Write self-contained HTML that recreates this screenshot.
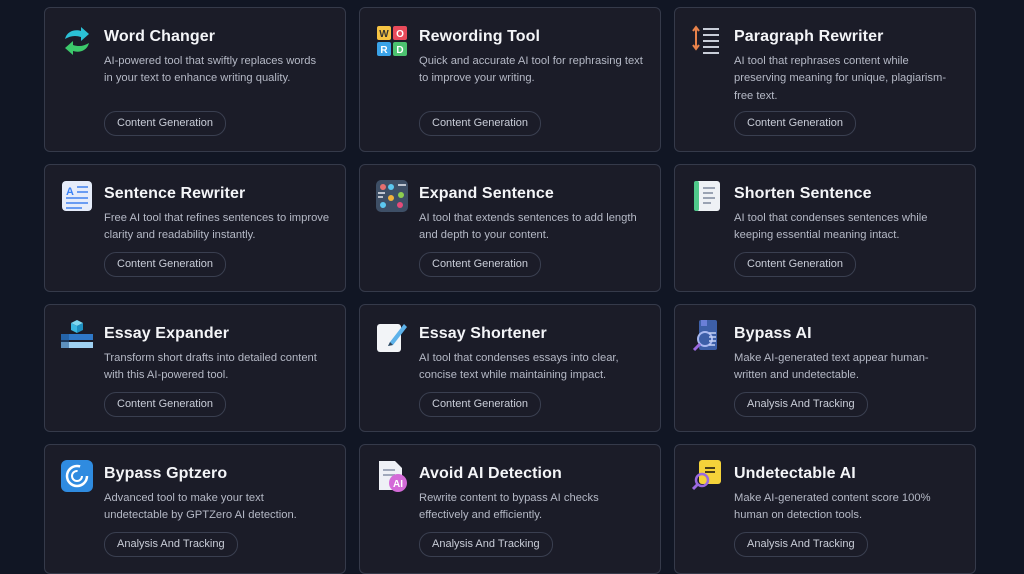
<!DOCTYPE html>
<html><head><meta charset="utf-8"><style>
html,body{margin:0;padding:0;background:#111624;width:1024px;height:555px;overflow:hidden;font-family:"Liberation Sans",sans-serif}
.c{position:absolute;width:302px;background:#1b1c28;border:1px solid #353a4a;border-radius:6px;box-sizing:border-box}
.ic{position:absolute;left:16px;width:32px;height:32px}
.t{position:absolute;left:59px;color:#f4f5f8;font-size:16px;font-weight:bold;letter-spacing:0.1px;white-space:nowrap}
.d{position:absolute;left:59px;width:229px;color:#b5b9c6;font-size:11.2px;line-height:17.3px}
.g{position:absolute;left:59px;height:23px;border:1px solid #3a3f50;border-radius:12px;padding:0 12px;color:#c9cdd8;font-size:11px;line-height:23px;white-space:nowrap}
</style></head><body>

<!-- row1 -->
<div class="c" style="left:44px;top:7px;height:145px">
<svg class="ic" style="top:17px" viewBox="0 0 32 32"><path d="M4 14 C6 6 14 4 20 6 L20 2 L28 9 L20 16 L20 12 C14 10 9 11 4 14Z" fill="#2bc1d6"/><path d="M28 18 C26 26 18 28 12 26 L12 30 L4 23 L12 16 L12 20 C18 22 23 21 28 18Z" fill="#3cc96b"/></svg>
<div class="t" style="top:20px">Word Changer</div>
<div class="d" style="top:45px;width:218px">AI-powered tool that swiftly replaces words in your text to enhance writing quality.</div>
<div class="g" style="top:103px">Content Generation</div></div>

<div class="c" style="left:359px;top:7px;height:145px">
<svg class="ic" style="top:17px" viewBox="0 0 32 32"><rect x="1" y="1" width="14" height="14" rx="2" fill="#f6c343"/><rect x="17" y="1" width="14" height="14" rx="2" fill="#e94a5a"/><rect x="1" y="17" width="14" height="14" rx="2" fill="#3aa3e8"/><rect x="17" y="17" width="14" height="14" rx="2" fill="#4cc26f"/><text x="8" y="12" font-size="10" text-anchor="middle" fill="#333" font-weight="bold">W</text><text x="24" y="12" font-size="10" text-anchor="middle" fill="#fff" font-weight="bold">O</text><text x="8" y="28" font-size="10" text-anchor="middle" fill="#fff" font-weight="bold">R</text><text x="24" y="28" font-size="10" text-anchor="middle" fill="#fff" font-weight="bold">D</text></svg>
<div class="t" style="top:20px">Rewording Tool</div>
<div class="d" style="top:45px">Quick and accurate AI tool for rephrasing text to improve your writing.</div>
<div class="g" style="top:103px">Content Generation</div></div>

<div class="c" style="left:674px;top:7px;height:145px">
<svg class="ic" style="top:16px" viewBox="0 0 32 32"><path d="M5 3v22M2 7l3-4 3 4M2 21l3 4 3-4" stroke="#e8824a" stroke-width="2" fill="none"/><path d="M12 5h16M12 11h16M12 17h16M12 23h16M12 29h16" stroke="#c8cdd8" stroke-width="2"/></svg>
<div class="t" style="top:20px">Paragraph Rewriter</div>
<div class="d" style="top:45px;width:222px">AI tool that rephrases content while preserving meaning for unique, plagiarism-free text.</div>
<div class="g" style="top:103px">Content Generation</div></div>

<!-- row2 -->
<div class="c" style="left:44px;top:164px;height:128px">
<svg class="ic" style="top:15px" viewBox="0 0 32 32"><rect x="1" y="1" width="30" height="30" rx="4" fill="#e6ecfa"/><text x="9" y="15" font-size="11" fill="#3b82f6" font-weight="bold" text-anchor="middle">A</text><path d="M16 7h11M16 12h11M5 18h22M5 23h22M5 28h16" stroke="#6a9cf2" stroke-width="2"/></svg>
<div class="t" style="top:20px">Sentence Rewriter</div>
<div class="d" style="top:45px">Free AI tool that refines sentences to improve clarity and readability instantly.</div>
<div class="g" style="top:87px">Content Generation</div></div>

<div class="c" style="left:359px;top:164px;height:128px">
<svg class="ic" style="top:15px" viewBox="0 0 32 32"><rect x="0" y="0" width="32" height="32" rx="5" fill="#3e4f66"/><circle cx="7" cy="7" r="3" fill="#e56f6f"/><circle cx="15" cy="7" r="3" fill="#5cc8f0"/><circle cx="25" cy="15" r="3" fill="#8dcf4f"/><circle cx="15" cy="18" r="3" fill="#f2b23b"/><circle cx="7" cy="25" r="3" fill="#5cc8f0"/><circle cx="24" cy="25" r="3" fill="#e54b7a"/><path d="M22 5h8M2 13h7M2 17h5" stroke="#e8ecf2" stroke-width="1.5"/></svg>
<div class="t" style="top:20px">Expand Sentence</div>
<div class="d" style="top:45px">AI tool that extends sentences to add length and depth to your content.</div>
<div class="g" style="top:87px">Content Generation</div></div>

<div class="c" style="left:674px;top:164px;height:128px">
<svg class="ic" style="top:15px" viewBox="0 0 32 32"><rect x="3" y="1" width="26" height="30" rx="3" fill="#eef1f5"/><rect x="3" y="1" width="5" height="30" rx="2" fill="#4fc98a"/><path d="M12 8h12M12 13h10M12 18h12M12 23h8" stroke="#9aa3b3" stroke-width="2"/></svg>
<div class="t" style="top:20px">Shorten Sentence</div>
<div class="d" style="top:45px">AI tool that condenses sentences while keeping essential meaning intact.</div>
<div class="g" style="top:87px">Content Generation</div></div>

<!-- row3 -->
<div class="c" style="left:44px;top:304px;height:128px">
<svg class="ic" style="top:15px" viewBox="0 0 32 32"><path d="M10 3l6-3 6 3-6 3z" fill="#7fd8f0"/><path d="M10 3v7l6 3V6z" fill="#3ab7e0"/><path d="M22 3v7l-6 3V6z" fill="#1e8fc0"/><rect x="0" y="14" width="32" height="6" fill="#2f78c8"/><rect x="0" y="22" width="32" height="6" fill="#9fd1f2"/><rect x="0" y="14" width="8" height="14" fill="#1c4f8a" opacity=".5"/></svg>
<div class="t" style="top:20px">Essay Expander</div>
<div class="d" style="top:45px">Transform short drafts into detailed content with this AI-powered tool.</div>
<div class="g" style="top:87px">Content Generation</div></div>

<div class="c" style="left:359px;top:304px;height:128px">
<svg class="ic" style="top:15px" viewBox="0 0 32 32"><rect x="1" y="4" width="24" height="28" rx="3" fill="#f2f4f7"/><path d="M14 22L28 4l3 3-14 18-5 1z" fill="#5db2ea"/><path d="M12 26l2-4 3 3z" fill="#33475b"/></svg>
<div class="t" style="top:20px">Essay Shortener</div>
<div class="d" style="top:45px">AI tool that condenses essays into clear, concise text while maintaining impact.</div>
<div class="g" style="top:87px">Content Generation</div></div>

<div class="c" style="left:674px;top:304px;height:128px">
<svg class="ic" style="top:15px" viewBox="0 0 32 32"><rect x="8" y="0" width="18" height="30" rx="2" fill="#3d5fa8"/><rect x="10" y="0" width="6" height="6" fill="#6a7fd8"/><circle cx="14" cy="19" r="7" fill="none" stroke="#a8b8f0" stroke-width="2"/><path d="M9 24l-6 6" stroke="#9b6ae0" stroke-width="3"/><path d="M18 13h7M18 17h7M18 21h7M18 25h6" stroke="#c7d3f5" stroke-width="1.5"/></svg>
<div class="t" style="top:20px">Bypass AI</div>
<div class="d" style="top:45px;width:222px">Make AI-generated text appear human-written and undetectable.</div>
<div class="g" style="top:87px">Analysis And Tracking</div></div>

<!-- row4 -->
<div class="c" style="left:44px;top:444px;height:130px">
<svg class="ic" style="top:15px" viewBox="0 0 32 32"><rect x="0" y="0" width="32" height="32" rx="6" fill="#2f8be0"/><circle cx="16" cy="16" r="10" fill="none" stroke="#fff" stroke-width="2.5" stroke-dasharray="50 13"/><circle cx="16" cy="16" r="5" fill="none" stroke="#fff" stroke-width="2" stroke-dasharray="24 8"/></svg>
<div class="t" style="top:20px">Bypass Gptzero</div>
<div class="d" style="top:45px;width:210px">Advanced tool to make your text undetectable by GPTZero AI detection.</div>
<div class="g" style="top:87px">Analysis And Tracking</div></div>

<div class="c" style="left:359px;top:444px;height:130px">
<svg class="ic" style="top:15px" viewBox="0 0 32 32"><path d="M3 1h16l7 7v22H3z" fill="#eef0f6"/><path d="M7 10h12M7 15h12" stroke="#a0a8bb" stroke-width="2"/><circle cx="22" cy="23" r="9" fill="#d46ad8"/><text x="22" y="27" font-size="10" fill="#fff" font-weight="bold" text-anchor="middle">AI</text></svg>
<div class="t" style="top:20px">Avoid AI Detection</div>
<div class="d" style="top:45px;width:190px">Rewrite content to bypass AI checks effectively and efficiently.</div>
<div class="g" style="top:87px">Analysis And Tracking</div></div>

<div class="c" style="left:674px;top:444px;height:130px">
<svg class="ic" style="top:15px" viewBox="0 0 32 32"><rect x="8" y="0" width="22" height="24" rx="3" fill="#f5d33a"/><path d="M14 8h10M14 12h10" stroke="#4a3f1a" stroke-width="2"/><circle cx="11" cy="20" r="6" fill="none" stroke="#9b6ae0" stroke-width="2.5"/><path d="M7 24l-5 5" stroke="#9b6ae0" stroke-width="3"/></svg>
<div class="t" style="top:20px">Undetectable AI</div>
<div class="d" style="top:45px;width:222px">Make AI-generated content score 100% human on detection tools.</div>
<div class="g" style="top:87px">Analysis And Tracking</div></div>

</body></html>
